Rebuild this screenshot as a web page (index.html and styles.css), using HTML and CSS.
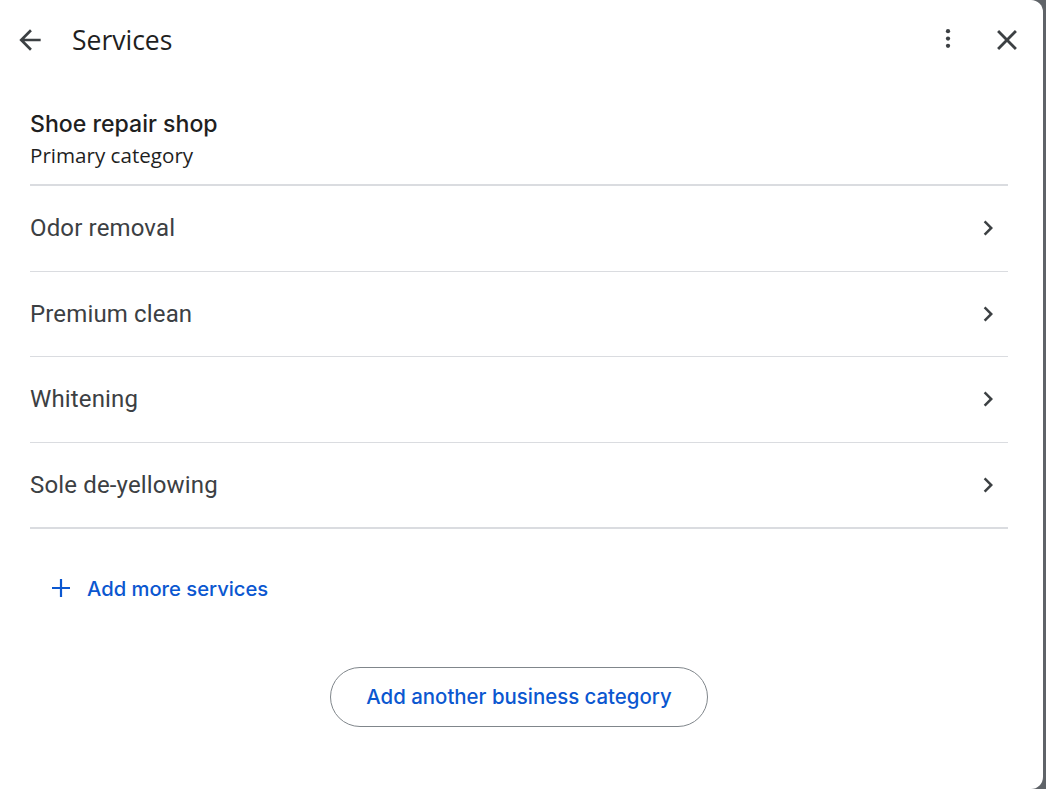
FILE: index.html
```html
<!DOCTYPE html>
<html lang="en">
<head>
<meta charset="utf-8">
<title>Services</title>
<link rel="stylesheet" href="styles.css">
</head>
<body>
<div class="panel">
  <header class="topbar">
    <button class="icon-btn back" aria-label="Back">
      <svg width="32" height="32" viewBox="0 0 24 24"><path d="M20 11H7.83l5.59-5.59L12 4l-8 8 8 8 1.41-1.41L7.83 13H20v-2z" fill="#3c4043"/></svg>
    </button>
    <h1 class="title">Services</h1>
    <div class="spacer"></div>
    <button class="icon-btn more" aria-label="More">
      <svg width="32" height="32" viewBox="0 0 24 24"><circle cx="12" cy="5.4" r="1.6" fill="#3c4043"/><circle cx="12" cy="10.9" r="1.6" fill="#3c4043"/><circle cx="12" cy="16.4" r="1.6" fill="#3c4043"/></svg>
    </button>
    <button class="icon-btn close" aria-label="Close">
      <svg width="34" height="34" viewBox="0 0 24 24"><path d="M19 6.41L17.59 5 12 10.59 6.41 5 5 6.41 10.59 12 5 17.59 6.41 19 12 13.41 17.59 19 19 17.59 13.41 12z" fill="#3c4043"/></svg>
    </button>
  </header>

  <section class="content">
    <div class="category">
      <div class="cat-name">Shoe repair shop</div>
      <div class="cat-sub">Primary category</div>
    </div>
    <ul class="list">
      <li class="row"><span>Odor removal</span><svg class="chev" width="30" height="30" viewBox="0 0 24 24"><path d="M8.59 16.59L13.17 12 8.59 7.41 10 6l6 6-6 6z" fill="#3c4043"/></svg></li>
      <li class="row"><span>Premium clean</span><svg class="chev" width="30" height="30" viewBox="0 0 24 24"><path d="M8.59 16.59L13.17 12 8.59 7.41 10 6l6 6-6 6z" fill="#3c4043"/></svg></li>
      <li class="row"><span>Whitening</span><svg class="chev" width="30" height="30" viewBox="0 0 24 24"><path d="M8.59 16.59L13.17 12 8.59 7.41 10 6l6 6-6 6z" fill="#3c4043"/></svg></li>
      <li class="row"><span>Sole de-yellowing</span><svg class="chev" width="30" height="30" viewBox="0 0 24 24"><path d="M8.59 16.59L13.17 12 8.59 7.41 10 6l6 6-6 6z" fill="#3c4043"/></svg></li>
    </ul>
    <div class="add-more">
      <svg width="20" height="20" viewBox="0 0 20 20"><path d="M10 1v18M1 10h18" stroke="#0b57d0" stroke-width="2.2" fill="none"/></svg>
      <span>Add more services</span>
    </div>
    <div class="btn-wrap">
      <button class="outline-btn">Add another business category</button>
    </div>
  </section>
</div>
</body>
</html>
```

FILE: styles.css
```css
html, body {
  margin: 0;
  padding: 0;
}
body {
  background: #5f6368;
  width: 1046px;
  height: 789px;
  overflow: hidden;
  font-family: Roboto, "Liberation Sans", sans-serif;
}
.panel {
  width: 1043px;
  height: 789px;
  background: #fff;
  border-radius: 0 12px 12px 0;
  box-sizing: border-box;
}
.topbar {
  height: 80px;
  display: flex;
  align-items: center;
  padding: 0 19px 0 14px;
}
.icon-btn {
  border: 0;
  background: none;
  padding: 0;
  width: 34px;
  height: 34px;
  display: flex;
  align-items: center;
  justify-content: center;
  cursor: pointer;
}
.back { width: 32px; }
.title {
  margin: 0 0 0 26px;
  font-family: "Open Sans", Roboto, sans-serif;
  font-weight: 400;
  font-size: 26.5px;
  color: #1f1f1f;
  letter-spacing: 0;
}
.spacer { flex: 1; }
.more { margin-right: 25px; }
.content {
  padding: 0 35px 0 30px;
}
.category {
  padding-top: 27px;
  padding-bottom: 15px;
  border-bottom: 2px solid #dadce0;
}
.cat-name {
  font-family: Inter, "Open Sans", sans-serif;
  font-size: 23.1px;
  font-weight: 500;
  color: #1f1f1f;
  line-height: 35px;
}
.cat-sub {
  font-family: "Open Sans", Roboto, sans-serif;
  font-size: 20.6px;
  color: #1f1f1f;
  line-height: 27px;
}
.list {
  list-style: none;
  margin: 0;
  padding: 0;
}
.row {
  height: 84.5px;
  display: flex;
  align-items: center;
  justify-content: space-between;
  border-bottom: 1px solid #dadce0;
  font-size: 24px;
  letter-spacing: 0.15px;
  color: #3c4043;
}
.row:last-child { border-bottom: 2px solid #dadce0; height: 84px; }
.chev { margin-right: 5px; }
.add-more {
  display: flex;
  align-items: center;
  gap: 16px;
  margin-top: 47px;
  padding-left: 21px;
  color: #0b57d0;
  font-family: Inter, "Open Sans", sans-serif;
  font-size: 20.2px;
  font-weight: 500;
}
.btn-wrap {
  display: flex;
  justify-content: center;
  margin-top: 66px;
  padding-left: 0;
}
.outline-btn {
  width: 378px;
  height: 60px;
  border: 1px solid #80868b;
  border-radius: 30px;
  background: #fff;
  color: #0b57d0;
  font-family: Inter, "Open Sans", sans-serif;
  font-size: 20.4px;
  font-weight: 500;
  cursor: pointer;
}
```
